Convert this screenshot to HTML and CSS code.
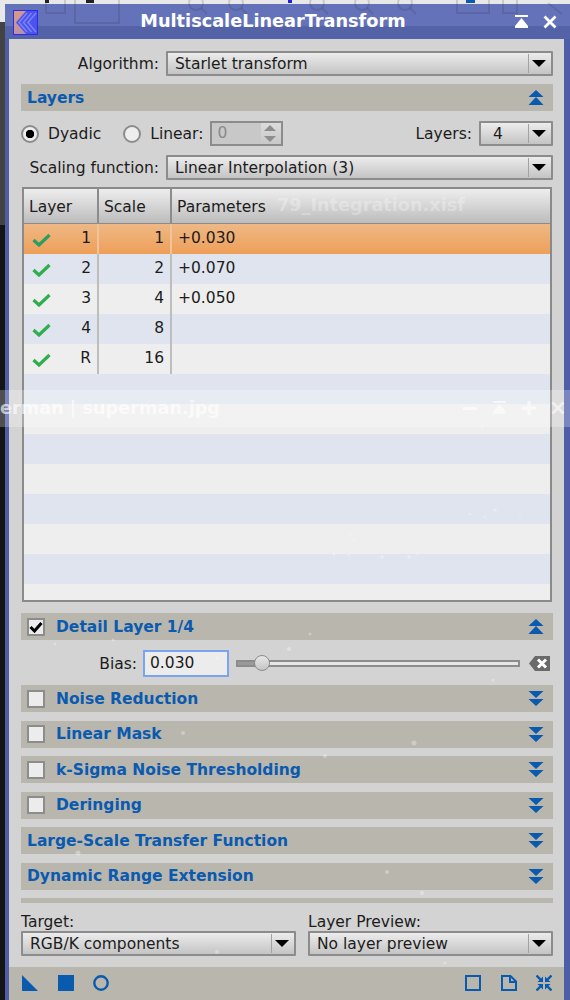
FILE: index.html
```html
<!DOCTYPE html>
<html lang="en">
<head>
    <meta charset="UTF-8">
    <meta name="viewport" content="width=device-width, initial-scale=1.0">
    <title>MultiscaleLinearTransform</title>
    <link rel="stylesheet" href="styles.css">
</head>
<body>
    <svg class="defs" width="0" height="0">
        <symbol id="chev-up" viewBox="0 0 16 15"><path d="M8 0 15.500 7H.5zM8 7 15.500 15H.5z"/></symbol>
        <symbol id="chev-down" viewBox="0 0 16 15"><path d="M.5 0h15L8 7zM.5 8h15L8 15z"/></symbol>
        <symbol id="check" viewBox="0 0 19 14"><path d="M1.500 7 7 12 17.500 2" fill="none" stroke="currentColor" stroke-width="3.200"/></symbol>
    </svg>

    <!-- toolbar of the main window, showing through the title bar -->
    <svg class="behind-top" width="570" height="30" viewBox="0 0 570 30">
        <g fill="#222"><rect x="45" width="4" height="3"/><rect x="86" width="8" height="3"/></g>
        <g fill="#1a22e0"><rect x="288" width="4" height="3"/><rect x="466" width="9" height="3" fill="#0a5ab0"/></g>
        <g fill="none" stroke="#333" stroke-opacity=".16" stroke-width="2">
            <rect x="46" y="-4" width="19" height="17"/><rect x="75" y="-4" width="44" height="27"/>
            <circle cx="196" cy="3" r="7"/><path d="M201 8 207 14"/><circle cx="236" cy="3" r="7"/><path d="M241 8 247 14"/>
            <circle cx="317" cy="3" r="7"/><path d="M322 8 328 14"/><circle cx="362" cy="3" r="7"/><path d="M367 8 373 14"/>
            <circle cx="405" cy="3" r="7"/><path d="M410 8 416 14"/>
            <rect x="457" y="-4" width="32" height="17"/><rect x="503" y="-4" width="14" height="17"/><path d="M548 3 562 14"/>
        </g>
    </svg>

    <div class="window">
        <div class="titlebar">
            <svg class="logo" width="25" height="25" viewBox="0 0 25 25">
                <defs><linearGradient id="logo-bg" x1="0" y1="0" x2="1" y2="1"><stop offset="0" stop-color="#dc9c78"/><stop offset="1" stop-color="#a888d0"/></linearGradient></defs>
                <rect x=".5" y=".5" width="24" height="24" fill="url(#logo-bg)" stroke="#2a2af0"/>
                <path d="M13 1 3 12.500 13 24h11V1z" fill="#4b52ee"/>
                <path d="M14 3 6 12.500 14 22M18.500 3 10.500 12.500 18.500 22M23 3 15 12.500 23 22" fill="none" stroke="#7c84f6" stroke-width="1.500"/>
            </svg>
            <div class="title">MultiscaleLinearTransform</div>
            <svg class="title-btn" width="15" height="13" viewBox="0 0 15 13"><path d="M1 0h13v2H1zM7.500 3 14 11v2H1v-2z" fill="#fff"/></svg>
            <svg class="title-btn" width="14" height="14" viewBox="0 0 14 14"><path d="M1.500 1.500 12.500 12.500M12.500 1.500 1.500 12.500" stroke="#fff" stroke-width="2.800" fill="none"/></svg>
        </div>

        <div class="panel">
            <div class="form-row">
                <label class="form-label">Algorithm:</label>
                <div class="combo grow">Starlet transform</div>
            </div>

            <div class="section first">
                <span class="section-title">Layers</span>
                <svg class="chev"><use href="#chev-up"/></svg>
            </div>

            <div class="radio-row">
                <span class="radio on"></span><span class="radio-text">Dyadic</span>
                <span class="radio second"></span><span class="radio-text">Linear:</span>
                <div class="spin">
                    <span class="spin-value">0</span>
                    <div class="spin-btns"><i class="up"></i><i class="down"></i></div>
                </div>
                <span class="layers-label">Layers:</span>
                <div class="combo layers-combo">4</div>
            </div>

            <div class="form-row scaling">
                <label class="form-label">Scaling function:</label>
                <div class="combo grow">Linear Interpolation (3)</div>
            </div>

            <div class="tree">
                <div class="tree-head">
                    <div class="th col-layer">Layer</div>
                    <div class="th col-scale">Scale</div>
                    <div class="th">Parameters</div>
                </div>
                <div class="tree-row selected">
                    <div class="td col-layer"><svg class="check"><use href="#check"/></svg>1</div>
                    <div class="td col-scale">1</div>
                    <div class="td param">+0.030</div>
                </div>
                <div class="tree-row">
                    <div class="td col-layer"><svg class="check"><use href="#check"/></svg>2</div>
                    <div class="td col-scale">2</div>
                    <div class="td param">+0.070</div>
                </div>
                <div class="tree-row">
                    <div class="td col-layer"><svg class="check"><use href="#check"/></svg>3</div>
                    <div class="td col-scale">4</div>
                    <div class="td param">+0.050</div>
                </div>
                <div class="tree-row">
                    <div class="td col-layer"><svg class="check"><use href="#check"/></svg>4</div>
                    <div class="td col-scale">8</div>
                    <div class="td param"></div>
                </div>
                <div class="tree-row">
                    <div class="td col-layer"><svg class="check"><use href="#check"/></svg>R</div>
                    <div class="td col-scale">16</div>
                    <div class="td param"></div>
                </div>
                <div class="tree-row empty"></div>
                <div class="tree-row empty"></div>
                <div class="tree-row empty"></div>
                <div class="tree-row empty"></div>
                <div class="tree-row empty"></div>
                <div class="tree-row empty"></div>
                <div class="tree-row empty"></div>
                <div class="tree-row empty"></div>
            </div>

            <div class="section detail">
                <span class="checkbox checked">
                    <svg width="14" height="12" viewBox="0 0 14 12"><path d="M1.500 6 5.500 10 12.500 2" fill="none" stroke="#000" stroke-width="3"/></svg>
                </span>
                <span class="section-title">Detail Layer 1/4</span>
                <svg class="chev"><use href="#chev-up"/></svg>
            </div>

            <div class="bias-row">
                <label class="bias-label">Bias:</label>
                <div class="edit">0.030</div>
                <div class="slider"><span class="slider-fill"></span><span class="thumb"></span></div>
                <svg class="erase" width="21" height="15" viewBox="0 0 21 15">
                    <path d="M6 0h15v15H6L0 7.500z" fill="#6a6a6a"/>
                    <path d="M9 3.500 17 11.500M17 3.500 9 11.500" stroke="#fff" stroke-width="3" fill="none"/>
                </svg>
            </div>

            <div class="stack">
                <div class="section">
                    <span class="checkbox"></span>
                    <span class="section-title">Noise Reduction</span>
                    <svg class="chev"><use href="#chev-down"/></svg>
                </div>
                <div class="section">
                    <span class="checkbox"></span>
                    <span class="section-title">Linear Mask</span>
                    <svg class="chev"><use href="#chev-down"/></svg>
                </div>
                <div class="section">
                    <span class="checkbox"></span>
                    <span class="section-title">k-Sigma Noise Thresholding</span>
                    <svg class="chev"><use href="#chev-down"/></svg>
                </div>
                <div class="section">
                    <span class="checkbox"></span>
                    <span class="section-title">Deringing</span>
                    <svg class="chev"><use href="#chev-down"/></svg>
                </div>
                <div class="section">
                    <span class="section-title">Large-Scale Transfer Function</span>
                    <svg class="chev"><use href="#chev-down"/></svg>
                </div>
                <div class="section">
                    <span class="section-title">Dynamic Range Extension</span>
                    <svg class="chev"><use href="#chev-down"/></svg>
                </div>
                <div class="section-cut"></div>
            </div>

            <div class="target-row">
                <div class="target-col target">
                    <label>Target:</label>
                    <div class="combo">RGB/K components</div>
                </div>
                <div class="target-col preview">
                    <label>Layer Preview:</label>
                    <div class="combo">No layer preview</div>
                </div>
            </div>
        </div>

        <div class="footer">
            <svg width="16" height="16" viewBox="0 0 16 16"><path d="M0 0 16 16H0z"/></svg>
            <svg width="16" height="16" viewBox="0 0 16 16"><path d="M0 0h16v16H0z"/></svg>
            <svg width="16" height="16" viewBox="0 0 16 16"><circle cx="8" cy="8" r="6.700" fill="none" stroke="#0a5ab0" stroke-width="2.400"/></svg>
            <span class="footer-gap"></span>
            <svg width="16" height="16" viewBox="0 0 16 16"><path d="M1 1h14v14H1z" fill="none" stroke="#0a5ab0" stroke-width="2"/></svg>
            <svg width="16" height="16" viewBox="0 0 16 16"><path d="M1 1h8.500L15 6.500V15H1zM9 1v6h6" fill="none" stroke="#0a5ab0" stroke-width="2"/></svg>
            <svg width="16" height="16" viewBox="0 0 16 16">
                <path d="M.5.5 4.500 4.500M15.500.5 11.500 4.500M.5 15.500 4.500 11.500M15.500 15.500 11.500 11.500" stroke="#0a5ab0" stroke-width="2.400" fill="none"/>
                <path d="M7 7H1.500L7 1.500zM9 7h5.500L9 1.500zM7 9H1.500L7 14.500zM9 9h5.500L9 14.500z"/>
            </svg>
        </div>
    </div>

    <!-- other image windows behind, seen through the translucent tool window -->
    <div class="ghost-text">79_Integration.xisf</div>
    <div class="ghost-bar">
        <span class="ghost-title">erman | superman.jpg</span>
        <span class="ghost-btns">
            <svg width="14" height="14" viewBox="0 0 14 14"><path d="M0 6h14v3H0z"/></svg>
            <svg width="15" height="13" viewBox="0 0 15 13"><path d="M1 0h13v2H1zM7.500 3 14 11v2H1v-2z"/></svg>
            <svg width="14" height="14" viewBox="0 0 14 14"><path d="M5.500 0h3v5.500H14v3H8.500V14h-3V8.500H0v-3h5.500z"/></svg>
            <svg width="14" height="14" viewBox="0 0 14 14"><path d="M1.500 1.500 12.500 12.500M12.500 1.500 1.500 12.500" stroke="#fff" stroke-width="2.800" fill="none"/></svg>
        </span>
    </div>

    <!-- stars of the image behind the window -->
    <svg class="stars" width="570" height="1000" viewBox="0 0 570 1000">
        <circle cx="482" cy="427" r="1.500"/><circle cx="351" cy="534" r="1"/><circle cx="354" cy="540" r="1"/>
        <circle cx="334" cy="554" r="1.500"/><circle cx="349" cy="555" r="1"/><circle cx="382" cy="557" r="1.800"/>
        <circle cx="409" cy="557" r="1.800"/><circle cx="417" cy="554" r="1"/><circle cx="495" cy="510" r="1.800"/>
        <circle cx="470" cy="514" r="1"/><circle cx="520" cy="517" r="1"/><circle cx="485" cy="517" r="1"/>
        <circle cx="414" cy="743" r="2.500"/><circle cx="325" cy="756" r="2"/><circle cx="289" cy="649" r="2"/>
        <circle cx="493" cy="680" r="1.500"/><circle cx="310" cy="634" r="1.500"/><circle cx="113" cy="640" r="1.500"/>
        <circle cx="55" cy="644" r="1.500"/><circle cx="183" cy="733" r="2"/><circle cx="217" cy="658" r="1.500"/>
        <circle cx="78" cy="853" r="2.500"/><circle cx="217" cy="952" r="2"/><circle cx="422" cy="893" r="2"/>
        <circle cx="387" cy="872" r="2"/><circle cx="445" cy="963" r="1.500"/>
    </svg>
</body>
</html>
```

FILE: styles.css
```css
* { margin: 0; padding: 0; box-sizing: border-box; }
html, body { height: 1000px; overflow: hidden; }
body {
    position: relative;
    font-family: "DejaVu Sans", sans-serif;
    font-size: 15.500px;
    color: #1c1c1c;
    background: linear-gradient(#e8e8e8 0 22px, #434343 22px 225px, #141414 225px);
}
.defs { position: absolute; }

.behind-top { position: absolute; top: 0; left: 0; z-index: 2; pointer-events: none; }

.window {
    height: 996px;
    margin: 4px 0 0 5px;
    display: flex;
    flex-direction: column;
    border-left: 4px solid #4f5da8;
    border-right: 6px solid #4f5da8;
}

/* title bar */
.titlebar {
    height: 35px;
    flex: none;
    margin: 0 -6px 0 -4px;
    padding: 0 13px 0 8px;
    display: flex;
    align-items: center;
    background: linear-gradient(#6472ba 0 22px, #5462a8 22px);
}
.logo { flex: none; margin-top: 2px; position: relative; z-index: 3; }
.title {
    flex: 1;
    padding: 0 0 1px 8px;
    text-align: center;
    color: #fff;
    font-size: 17.700px;
    font-weight: bold;
}
.title-btn { flex: none; margin-left: 14px; position: relative; z-index: 3; }

/* main panel */
.panel {
    flex: 1;
    padding: 12px 11px 0 12px;
    background: #d3d3d3;
}
.form-row { display: flex; align-items: center; gap: 7px; }
.form-label { width: 138px; text-align: right; flex: none; }
.grow { flex: 1; }

.combo {
    position: relative;
    height: 25px;
    line-height: 22px;
    padding-left: 7px;
    border: 2px solid #8c8c8c;
    border-radius: 1px;
    background: linear-gradient(#ececec, #c4c4c4);
    white-space: nowrap;
}
.combo::before {
    content: "";
    position: absolute;
    right: 22px;
    top: 1px;
    bottom: 1px;
    width: 1px;
    background: #a2a2a2;
}
.combo::after {
    content: "";
    position: absolute;
    right: 5px;
    top: 7px;
    border-left: 7px solid transparent;
    border-right: 7px solid transparent;
    border-top: 7px solid #000;
}

/* section bars */
.section {
    height: 27px;
    margin-top: 9px;
    padding: 0 9px 0 6px;
    display: flex;
    align-items: center;
    background: #b9b6ad;
}
.section.first { margin-top: 8px; }
.section-title {
    flex: 1;
    color: #0a5ab0;
    font-weight: bold;
}
.chev { width: 16px; height: 15px; fill: #0a5ab0; flex: none; }
.checkbox {
    width: 18px;
    height: 18px;
    flex: none;
    margin-right: 11px;
    display: flex;
    align-items: center;
    justify-content: center;
    border: 2px solid #8c8c8c;
    background: #ececec;
}

/* dyadic / linear row */
.radio-row {
    height: 25px;
    margin-top: 10px;
    display: flex;
    align-items: center;
}
.radio {
    width: 18px;
    height: 18px;
    flex: none;
    border: 2px solid #8c8c8c;
    border-radius: 50%;
    background: #eeeeee;
}
.radio.on { background: radial-gradient(circle, #000 0 4px, #eeeeee 4.500px); }
.radio.second { margin-left: 22px; }
.radio-text { margin-left: 9px; }
.spin {
    width: 73px;
    height: 25px;
    margin-left: 7px;
    display: flex;
    border: 2px solid #8c8c8c;
    background: #c8c8c8;
}
.spin-value { flex: 1; padding-left: 5px; line-height: 21px; color: #8a8a8a; }
.spin-btns {
    width: 20px;
    display: flex;
    flex-direction: column;
    background: linear-gradient(#dcdcdc, #c8c8c8);
}
.spin-btns i {
    flex: 1;
    position: relative;
}
.spin-btns i::after {
    content: "";
    position: absolute;
    left: 3px;
    border-left: 6px solid transparent;
    border-right: 6px solid transparent;
}
.spin-btns .up::after { top: 2px; border-bottom: 6px solid #8e8e8e; }
.spin-btns .down::after { top: 2px; border-top: 6px solid #8e8e8e; }
.layers-label { margin-left: auto; }
.layers-combo { width: 74px; margin-left: 7px; padding-left: 12px; }

.scaling { margin-top: 9px; }

/* layer table */
.tree {
    height: 415px;
    margin: 7px 1px 0;
    overflow: hidden;
    border: 2px solid #8a8a8a;
    background: #eeeeee;
}
.tree-head {
    height: 35px;
    display: flex;
    background: linear-gradient(#eeeeee, #bcbcbc);
    border-bottom: 1px solid #8c8c8c;
}
.th {
    line-height: 36px;
    padding-left: 5px;
    flex: 1;
}
.th.col-layer, .th.col-scale { border-right: 2px solid #8c8c8c; flex: none; }
.col-layer { width: 75px; }
.col-scale { width: 73px; }
.tree-row { height: 30px; display: flex; background: #eeeeee; }
.tree-row:nth-child(odd) { background: #dfe4ee; }
.tree-row.selected { background: linear-gradient(#efb885, #ee9f58); }
.td { line-height: 28px; flex: none; }
.td.col-layer, .td.col-scale {
    text-align: right;
    padding-right: 6px;
    border-right: 2px solid #bdbdbd;
}
.td.param { padding-left: 6px; flex: 1; }
.check {
    float: left;
    width: 19px;
    height: 14px;
    margin: 9px 0 0 8px;
    color: #2eae4c;
}
.selected .check { color: #2a9e60; }
.selected .td.col-layer, .selected .td.col-scale { border-right-color: #f0c49a; }

.detail { margin-top: 11px; }

/* bias slider */
.bias-row {
    height: 27px;
    margin-top: 10px;
    display: flex;
    align-items: center;
}
.bias-label { width: 116px; text-align: right; flex: none; }
.edit {
    width: 86px;
    height: 27px;
    margin-left: 6px;
    padding-left: 5px;
    line-height: 23px;
    flex: none;
    border: 2px solid #7aa5ee;
    background: #ececec;
}
.slider {
    position: relative;
    width: 284px;
    height: 7px;
    margin-left: 7px;
    flex: none;
    border: 2px solid #8c8c8c;
    background: #e6e6e6;
}
.slider-fill {
    display: block;
    width: 24px;
    height: 100%;
    background: #9a9a9a;
}
.thumb {
    position: absolute;
    left: 16px;
    top: -7px;
    width: 16px;
    height: 16px;
    border: 1px solid #8c8c8c;
    border-radius: 50%;
    background: linear-gradient(#e8e8e8, #c4c4c4);
}
.erase { margin-left: 9px; flex: none; }

.stack { display: flex; flex-direction: column; }
.stack .section { margin-top: 8.500px; }
.section-cut { height: 5px; margin-top: 8.500px; background: #b9b6ad; }
.bias-row + .stack .section:first-child { margin-top: 8px; }

/* target and preview */
.target-row { margin-top: 10px; display: flex; gap: 12px; }
.target-col label { display: block; height: 18px; line-height: 18px; }
.target { width: 275px; }
.preview { flex: 1; }

/* bottom icon bar */
.footer {
    height: 33px;
    flex: none;
    padding: 0 12px 0 13px;
    display: flex;
    align-items: center;
    gap: 19.500px;
    background: #b9b6ad;
}
.footer svg { fill: #0a5ab0; flex: none; margin-top: -1px; }
.footer-gap { flex: 1; }

/* overlays */
.ghost-text {
    position: absolute;
    right: 105px;
    top: 195px;
    font-size: 17.700px;
    font-weight: bold;
    white-space: pre;
    color: rgba(255, 255, 255, 0.28);
}
.ghost-bar {
    position: absolute;
    left: 0;
    right: 0;
    top: 390px;
    height: 37px;
    padding-bottom: 2px;
    display: flex;
    align-items: center;
    background: rgba(255, 255, 255, 0.25);
    color: rgba(255, 255, 255, 0.65);
    font-size: 17.700px;
    font-weight: bold;
}
.ghost-title { flex: 1; padding-top: 1px; }
.ghost-btns { display: flex; gap: 15px; align-items: center; margin-right: 5px; }
.ghost-btns svg { fill: #fff; opacity: 0.6; }

.stars { position: absolute; top: 0; left: 0; fill: #fff; opacity: 0.3; pointer-events: none; }
```
